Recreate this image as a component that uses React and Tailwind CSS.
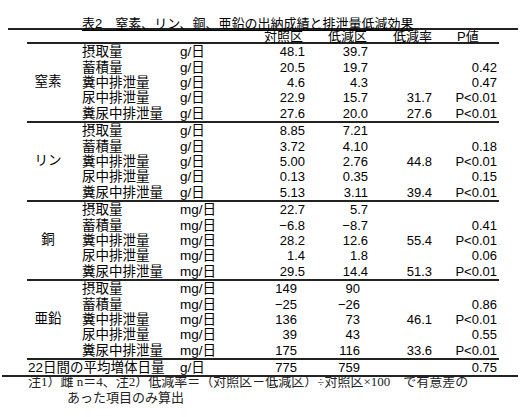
const groups = [
  {
    name: '窒素', unit: 'g/日', int: false,
    rows: [
      ['摂取量', '48.1', '39.7', '', ''],
      ['蓄積量', '20.5', '19.7', '', '0.42'],
      ['糞中排泄量', '4.6', '4.3', '', '0.47'],
      ['尿中排泄量', '22.9', '15.7', '31.7', 'P<0.01'],
      ['糞尿中排泄量', '27.6', '20.0', '27.6', 'P<0.01'],
    ],
  },
  {
    name: 'リン', unit: 'g/日', int: false,
    rows: [
      ['摂取量', '8.85', '7.21', '', ''],
      ['蓄積量', '3.72', '4.10', '', '0.18'],
      ['糞中排泄量', '5.00', '2.76', '44.8', 'P<0.01'],
      ['尿中排泄量', '0.13', '0.35', '', '0.15'],
      ['糞尿中排泄量', '5.13', '3.11', '39.4', 'P<0.01'],
    ],
  },
  {
    name: '銅', unit: 'mg/日', int: false,
    rows: [
      ['摂取量', '22.7', '5.7', '', ''],
      ['蓄積量', '−6.8', '−8.7', '', '0.41'],
      ['糞中排泄量', '28.2', '12.6', '55.4', 'P<0.01'],
      ['尿中排泄量', '1.4', '1.8', '', '0.06'],
      ['糞尿中排泄量', '29.5', '14.4', '51.3', 'P<0.01'],
    ],
  },
  {
    name: '亜鉛', unit: 'mg/日', int: true,
    rows: [
      ['摂取量', '149', '90', '', ''],
      ['蓄積量', '−25', '−26', '', '0.86'],
      ['糞中排泄量', '136', '73', '46.1', 'P<0.01'],
      ['尿中排泄量', '39', '43', '', '0.55'],
      ['糞尿中排泄量', '175', '116', '33.6', 'P<0.01'],
    ],
  },
]

function Row({ label, unit, int, vals }) {
  return (
    <div className="flex-1 grid grid-cols-[98px_70px_55px_63px_64px_65px] items-center leading-[15px]">
      <span className="text-[13.5px]">{label}</span>
      <span className="text-[13.5px]">{unit}</span>
      <span className={'text-right text-[13px] ' + (int ? 'pr-[8px]' : '')}>{vals[0]}</span>
      <span className={'text-right text-[13px] ' + (int ? 'pr-[8px]' : '')}>{vals[1]}</span>
      <span className="text-right text-[13px]">{vals[2]}</span>
      <span className="text-right text-[13px]">{vals[3]}</span>
    </div>
  )
}

export default function App() {
  return (
    <div className="w-[530px] h-[417px] bg-white text-black font-['Liberation_Sans','Noto_Sans_CJK_JP',sans-serif] overflow-hidden">
      {/* title */}
      <div className="h-[28px] pt-[11px] pl-[82px]">
        <span className="text-[13px] leading-[14px] underline underline-offset-[2px] whitespace-nowrap">
          表2　窒素、リン、銅、亜鉛の出納成績と排泄量低減効果
        </span>
      </div>
      <div className="ml-[8px] w-[510px] h-[2px] bg-[#222]" />

      <div className="ml-[27px] w-[472px]">
        {/* header */}
        <div className="h-[14px] pt-[1px] border-b-2 border-[#222] grid grid-cols-[223px_55px_63px_64px_65px] items-end leading-[11px] text-[13px]">
          <span />
          <span className="text-right pr-[2px] whitespace-nowrap">対照区</span>
          <span className="text-right pr-[1px] whitespace-nowrap">低減区</span>
          <span className="text-right whitespace-nowrap">低減率</span>
          <span className="pl-[25px] whitespace-nowrap">P値</span>
        </div>

        {groups.map((g) => (
          <div key={g.name} className="h-[79px] border-b-2 border-[#222] flex">
            <div className="w-[55px] pr-[13px] flex items-center justify-center text-[13.5px]">
              {g.name}
            </div>
            <div className="flex-1 flex flex-col">
              {g.rows.map((r) => (
                <Row key={r[0]} label={r[0]} unit={g.unit} int={g.int} vals={r.slice(1)} />
              ))}
            </div>
          </div>
        ))}

        {/* daily gain */}
        <div className="h-[15px] grid grid-cols-[153px_70px_55px_63px_64px_65px] items-center leading-[15px]">
          <span className="pl-[1px] text-[13.5px] whitespace-nowrap">22日間の平均増体日量</span>
          <span className="text-[13.5px]">g/日</span>
          <span className="text-right pr-[8px] text-[13px]">775</span>
          <span className="text-right pr-[8px] text-[13px]">759</span>
          <span />
          <span className="text-right text-[13px]">0.75</span>
        </div>
      </div>
      <div className="ml-[2px] w-[516px] h-[2px] bg-[#222]" />

      {/* notes */}
      <div className="-mt-[3px] ml-[28px] text-[13px] leading-[16px] text-[#222] font-['Liberation_Serif','Noto_Sans_CJK_JP',serif] whitespace-nowrap">
        <div>注1）雌 n＝4、注2）低減率＝（対照区－低減区）÷対照区×100　で有意差の</div>
        <div className="pl-[39px]">あった項目のみ算出</div>
      </div>
    </div>
  )
}
